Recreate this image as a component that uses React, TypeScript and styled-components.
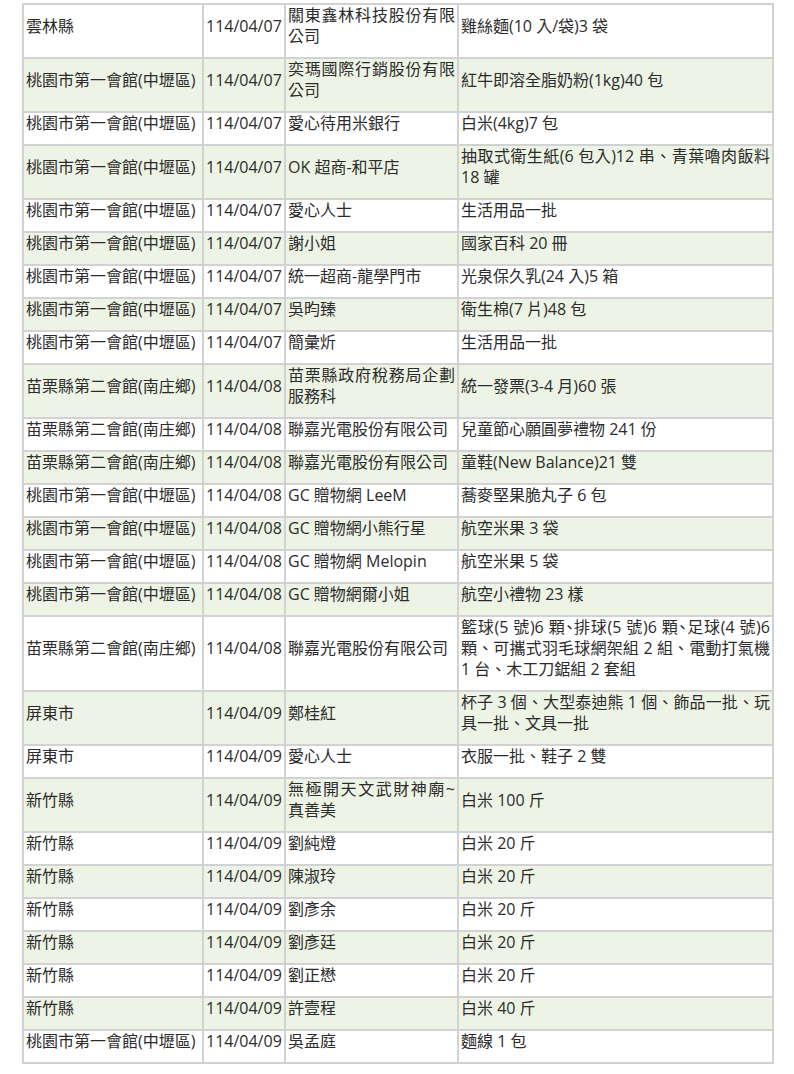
import React from "react";
import styled, { createGlobalStyle } from "styled-components";

type Donation = [string, string, string, React.ReactNode];

// the reference squeezes the enumeration commas on the first line to half width
const Halt = styled.span`
  font-feature-settings: "halt";
`;

const donations: Donation[] = [
  ["雲林縣", "114/04/07", "關東鑫林科技股份有限公司", "雞絲麵(10 入/袋)3 袋"],
  ["桃園市第一會館(中壢區)", "114/04/07", "奕瑪國際行銷股份有限公司", "紅牛即溶全脂奶粉(1kg)40 包"],
  ["桃園市第一會館(中壢區)", "114/04/07", "愛心待用米銀行", "白米(4kg)7 包"],
  ["桃園市第一會館(中壢區)", "114/04/07", "OK 超商-和平店", "抽取式衛生紙(6 包入)12 串、青葉嚕肉飯料 18 罐"],
  ["桃園市第一會館(中壢區)", "114/04/07", "愛心人士", "生活用品一批"],
  ["桃園市第一會館(中壢區)", "114/04/07", "謝小姐", "國家百科 20 冊"],
  ["桃園市第一會館(中壢區)", "114/04/07", "統一超商-龍學門市", "光泉保久乳(24 入)5 箱"],
  ["桃園市第一會館(中壢區)", "114/04/07", "吳昀臻", "衛生棉(7 片)48 包"],
  ["桃園市第一會館(中壢區)", "114/04/07", "簡彙炘", "生活用品一批"],
  ["苗栗縣第二會館(南庄鄉)", "114/04/08", "苗栗縣政府稅務局企劃服務科", "統一發票(3-4 月)60 張"],
  ["苗栗縣第二會館(南庄鄉)", "114/04/08", "聯嘉光電股份有限公司", "兒童節心願圓夢禮物 241 份"],
  ["苗栗縣第二會館(南庄鄉)", "114/04/08", "聯嘉光電股份有限公司", "童鞋(New Balance)21 雙"],
  ["桃園市第一會館(中壢區)", "114/04/08", "GC 贈物網 LeeM", "蕎麥堅果脆丸子 6 包"],
  ["桃園市第一會館(中壢區)", "114/04/08", "GC 贈物網小熊行星", "航空米果 3 袋"],
  ["桃園市第一會館(中壢區)", "114/04/08", "GC 贈物網 Melopin", "航空米果 5 袋"],
  ["桃園市第一會館(中壢區)", "114/04/08", "GC 贈物網爾小姐", "航空小禮物 23 樣"],
  [
    "苗栗縣第二會館(南庄鄉)",
    "114/04/08",
    "聯嘉光電股份有限公司",
    <>
      籃球(5 號)6 顆<Halt>、</Halt>排球(5 號)6 顆<Halt>、</Halt>足球(4 號)6
      顆、可攜式羽毛球網架組 2 組、電動打氣機 1 台、木工刀鋸組 2 套組
    </>
  ],
  ["屏東市", "114/04/09", "鄭桂紅", "杯子 3 個、大型泰迪熊 1 個、飾品一批、玩具一批、文具一批"],
  ["屏東市", "114/04/09", "愛心人士", "衣服一批、鞋子 2 雙"],
  ["新竹縣", "114/04/09", "無極開天文武財神廟~真善美", "白米 100 斤"],
  ["新竹縣", "114/04/09", "劉純燈", "白米 20 斤"],
  ["新竹縣", "114/04/09", "陳淑玲", "白米 20 斤"],
  ["新竹縣", "114/04/09", "劉彥余", "白米 20 斤"],
  ["新竹縣", "114/04/09", "劉彥廷", "白米 20 斤"],
  ["新竹縣", "114/04/09", "劉正懋", "白米 20 斤"],
  ["新竹縣", "114/04/09", "許壹程", "白米 40 斤"],
  ["桃園市第一會館(中壢區)", "114/04/09", "吳孟庭", "麵線 1 包"]
];

const columnWidths = [180, 82, 173, 315];

const GlobalStyle = createGlobalStyle`
  body {
    margin: 0;
    background: #ffffff;
    font-family: "Open Sans", "Noto Sans CJK TC", sans-serif;
    color: #2b2b2b;
  }
`;

const Page = styled.div`
  padding: 3px 0 0 22px;
`;

const DonationTable = styled.table`
  width: 750px;
  table-layout: fixed;
  border-collapse: collapse;
  border: 2px solid #d2d2d2;
  font-size: 16px;
  line-height: 21px;
`;

const Col = styled.col<{ $width: number }>`
  width: ${({ $width }) => `${$width}px`};
`;

const Row = styled.tr<{ $alt: boolean }>`
  background: ${({ $alt }) => ($alt ? "#eef4e5" : "#ffffff")};
`;

const Cell = styled.td<{ $nowrap?: boolean }>`
  border: 2px solid #d2d2d2;
  padding: 0 2px 10px 2px;
  vertical-align: middle;
  text-align: justify;
  white-space: ${({ $nowrap }) => ($nowrap ? "nowrap" : "normal")};
  overflow: hidden;
`;

export default function App() {
  return (
    <Page>
      <GlobalStyle />
      <DonationTable>
        <colgroup>
          {columnWidths.map((w, i) => (
            <Col key={i} $width={w} />
          ))}
        </colgroup>
        <tbody>
          {donations.map(([place, date, donor, item], i) => (
            <Row key={i} $alt={i % 2 === 1}>
              <Cell $nowrap>{place}</Cell>
              <Cell $nowrap>{date}</Cell>
              <Cell>{donor}</Cell>
              <Cell>{item}</Cell>
            </Row>
          ))}
        </tbody>
      </DonationTable>
    </Page>
  );
}
